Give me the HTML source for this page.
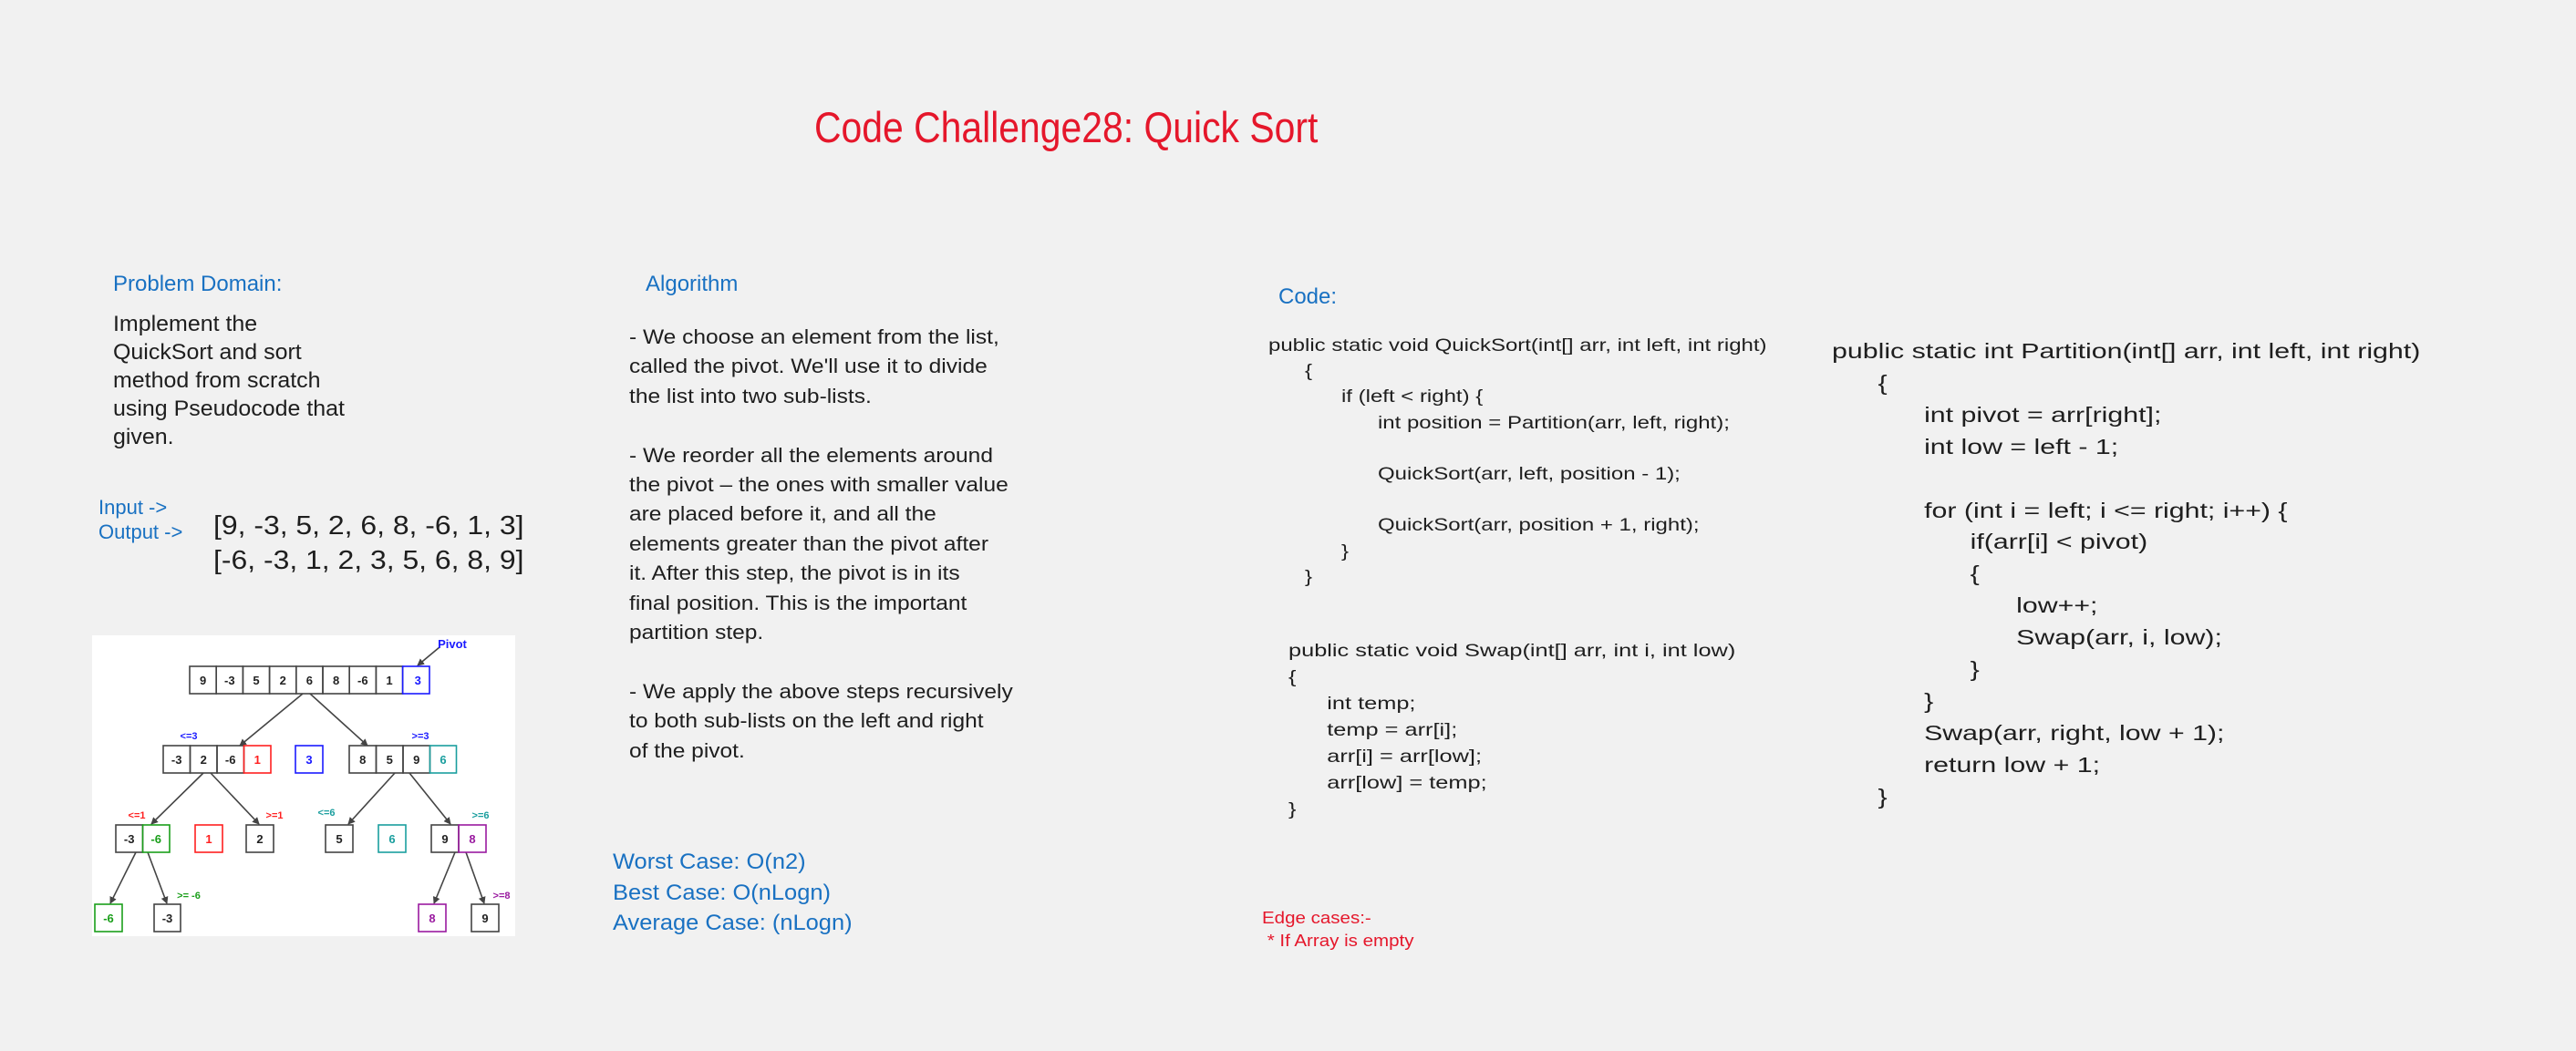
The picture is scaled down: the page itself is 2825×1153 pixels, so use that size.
<!DOCTYPE html>
<html><head><meta charset="utf-8"><style>
body{margin:0;width:2825px;height:1153px;background:#f1f1f1;position:relative;overflow:hidden;font-family:"Liberation Sans",sans-serif;}
.t{position:absolute;white-space:pre;color:#1e1e1e;transform-origin:0 0;}
.b{color:#1971c2}
.r{color:#e5172b}
</style></head><body>
<div class="t r" style="left:893px;top:112px;font-size:47px;transform:scaleX(0.87)">Code Challenge28: Quick Sort</div>

<div class="t b" style="left:124px;top:298px;font-size:24px;">Problem Domain:</div>
<div class="t" style="left:124px;top:340px;font-size:24px;line-height:31px;transform:scaleX(1.04)">Implement the
QuickSort and sort
method from scratch
using Pseudocode that
given.</div>

<div class="t b" style="left:108px;top:543px;font-size:22px;line-height:27px;">Input -&gt;
Output -&gt;</div>
<div class="t" style="left:234px;top:558px;font-size:29px;line-height:38px;transform:scaleX(1.1)">[9, -3, 5, 2, 6, 8, -6, 1, 3]
[-6, -3, 1, 2, 3, 5, 6, 8, 9]</div>

<div class="t b" style="left:708px;top:298px;font-size:24px;">Algorithm</div>
<div class="t" style="left:690px;top:354px;font-size:22.5px;line-height:32.4px;transform:scaleX(1.09)">- We choose an element from the list,
called the pivot. We'll use it to divide
the list into two sub-lists.

- We reorder all the elements around
the pivot – the ones with smaller value
are placed before it, and all the
elements greater than the pivot after
it. After this step, the pivot is in its
final position. This is the important
partition step.

- We apply the above steps recursively
to both sub-lists on the left and right
of the pivot.</div>

<div class="t b" style="left:672px;top:929px;font-size:24px;line-height:33.5px;transform:scaleX(1.06)">Worst Case: O(n2)
Best Case: O(nLogn)
Average Case: (nLogn)</div>

<div class="t b" style="left:1402px;top:312px;font-size:24px;">Code:</div>
<div class="t" style="left:1391px;top:365px;font-size:19.5px;line-height:28.2px;transform:scaleX(1.23)">public static void QuickSort(int[] arr, int left, int right)
      {
            if (left &lt; right) {
                  int position = Partition(arr, left, right);

                  QuickSort(arr, left, position - 1);

                  QuickSort(arr, position + 1, right);
            }
      }</div>
<div class="t" style="left:1413px;top:700px;font-size:19.5px;line-height:29px;transform:scaleX(1.3)">public static void Swap(int[] arr, int i, int low)
{
      int temp;
      temp = arr[i];
      arr[i] = arr[low];
      arr[low] = temp;
}</div>
<div class="t" style="left:2009px;top:368px;font-size:23.5px;line-height:34.9px;transform:scaleX(1.29)">public static int Partition(int[] arr, int left, int right)
      {
            int pivot = arr[right];
            int low = left - 1;

            for (int i = left; i &lt;= right; i++) {
                  if(arr[i] &lt; pivot)
                  {
                        low++;
                        Swap(arr, i, low);
                  }
            }
            Swap(arr, right, low + 1);
            return low + 1;
      }</div>

<div class="t r" style="left:1384px;top:995px;font-size:18px;line-height:25px;transform:scaleX(1.14)">Edge cases:-
 * If Array is empty</div>

<svg style="position:absolute;left:0;top:0" width="2825" height="1153" font-family="Liberation Sans, sans-serif" font-weight="bold" font-size="13" text-anchor="middle">
<defs><marker id="a" markerWidth="8" markerHeight="8" refX="7" refY="4" orient="auto" markerUnits="userSpaceOnUse"><path d="M0,0 L8,4 L0,8 Z" fill="#444"/></marker></defs>
<rect x="101" y="697" width="464" height="330" fill="#fff"/>
<g stroke="#444" stroke-width="1.6" fill="none" marker-end="url(#a)">
<line x1="482" y1="710" x2="458" y2="730"/>
<line x1="332" y1="761" x2="263" y2="818"/>
<line x1="340" y1="761" x2="403" y2="818"/>
<line x1="223" y1="848" x2="166" y2="904"/>
<line x1="231" y1="848" x2="284" y2="904"/>
<line x1="433" y1="848" x2="382" y2="904"/>
<line x1="449" y1="848" x2="494" y2="904"/>
<line x1="149" y1="935" x2="121" y2="991"/>
<line x1="162" y1="935" x2="183" y2="991"/>
<line x1="499" y1="935" x2="476" y2="991"/>
<line x1="511" y1="935" x2="531" y2="991"/>
</g>
<g stroke-width="1.6" fill="none">
<g stroke="#444">
<rect x="208" y="731" width="29.2" height="30"/><rect x="237.2" y="731" width="29.2" height="30"/><rect x="266.4" y="731" width="29.2" height="30"/><rect x="295.6" y="731" width="29.2" height="30"/><rect x="324.8" y="731" width="29.2" height="30"/><rect x="354" y="731" width="29.2" height="30"/><rect x="383.2" y="731" width="29.2" height="30"/><rect x="412.4" y="731" width="29.2" height="30"/>
<rect x="179" y="818" width="29.5" height="30"/><rect x="208.5" y="818" width="29.5" height="30"/><rect x="238" y="818" width="29.5" height="30"/>
<rect x="383" y="818" width="29.5" height="30"/><rect x="412.5" y="818" width="29.5" height="30"/><rect x="442" y="818" width="29.5" height="30"/>
<rect x="127" y="905" width="29.5" height="30"/><rect x="270" y="905" width="30" height="30"/><rect x="357" y="905" width="30" height="30"/><rect x="473" y="905" width="30" height="30"/>
<rect x="169" y="992" width="29" height="30"/><rect x="517" y="992" width="30" height="30"/>
</g>
<rect x="441.6" y="731" width="29.4" height="30" stroke="#1a1aff"/>
<rect x="324" y="818" width="30" height="30" stroke="#1a1aff"/>
<rect x="267.5" y="818" width="29.5" height="30" stroke="#ff2020"/>
<rect x="214" y="905" width="30" height="30" stroke="#ff2020"/>
<rect x="471.5" y="818" width="29" height="30" stroke="#1a9e9e"/>
<rect x="415" y="905" width="30" height="30" stroke="#1a9e9e"/>
<rect x="156.5" y="905" width="29.5" height="30" stroke="#1a9e1a"/>
<rect x="104" y="992" width="30" height="30" stroke="#1a9e1a"/>
<rect x="503" y="905" width="30" height="30" stroke="#9a1aa0"/>
<rect x="459" y="992" width="30" height="30" stroke="#9a1aa0"/>
</g>
<g fill="#222">
<text x="222.6" y="751">9</text><text x="251.8" y="751">-3</text><text x="281" y="751">5</text><text x="310.2" y="751">2</text><text x="339.4" y="751">6</text><text x="368.6" y="751">8</text><text x="397.8" y="751">-6</text><text x="427" y="751">1</text>
<text x="193.7" y="838">-3</text><text x="223.2" y="838">2</text><text x="252.7" y="838">-6</text>
<text x="397.7" y="838">8</text><text x="427.2" y="838">5</text><text x="456.7" y="838">9</text>
<text x="141.7" y="925">-3</text><text x="285" y="925">2</text><text x="372" y="925">5</text><text x="488" y="925">9</text>
<text x="183.5" y="1012">-3</text><text x="532" y="1012">9</text>
</g>
<g fill="#1a1aff"><text x="496" y="711">Pivot</text><text x="458.3" y="751">3</text><text x="339" y="838">3</text><text x="207" y="811" font-size="11">&lt;=3</text><text x="461" y="811" font-size="11">&gt;=3</text></g>
<g fill="#ff2020"><text x="282.2" y="838">1</text><text x="229" y="925">1</text><text x="150" y="898" font-size="11">&lt;=1</text><text x="301" y="898" font-size="11">&gt;=1</text></g>
<g fill="#1a9e9e"><text x="486" y="838">6</text><text x="430" y="925">6</text><text x="358" y="895" font-size="11">&lt;=6</text><text x="527" y="898" font-size="11">&gt;=6</text></g>
<g fill="#1a9e1a"><text x="171.2" y="925">-6</text><text x="119" y="1012">-6</text><text x="207" y="986" font-size="11">&gt;= -6</text></g>
<g fill="#9a1aa0"><text x="518" y="925">8</text><text x="474" y="1012">8</text><text x="550" y="986" font-size="11">&gt;=8</text></g>
</svg>
</body></html>
